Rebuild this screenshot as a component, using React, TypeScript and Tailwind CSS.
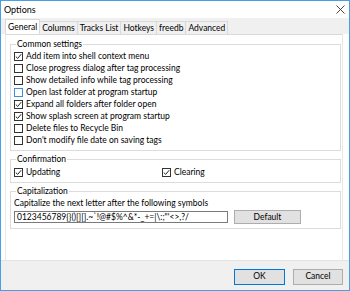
import { useState } from 'react';

const common = [
  { label: 'Add item into shell context menu', on: true },
  { label: 'Close progress dialog after tag processing', on: false },
  { label: 'Show detailed info while tag processing', on: false },
  { label: 'Open last folder at program startup', on: false, focus: true },
  { label: 'Expand all folders after folder open', on: true },
  { label: 'Show splash screen at program startup', on: true },
  { label: 'Delete files to Recycle Bin', on: false },
  { label: "Don't modify file date on saving tags", on: false },
];

const tabs = ['General', 'Columns', 'Tracks List', 'Hotkeys', 'freedb', 'Advanced'];

function Check({ on, focus, label }: { on: boolean; focus?: boolean; label: string }) {
  return (
    <div className="flex items-center h-[12px] gap-[3px]">
      <span
        className={`w-[9px] h-[9px] border bg-white flex items-center justify-center ${
          focus ? 'border-[#3c8ee0]' : 'border-[#333]'
        }`}
      >
        {on && (
          <svg width="7" height="7" viewBox="0 0 7 7">
            <path d="M0.8 3.6 L2.7 5.4 L6.2 1.2" fill="none" stroke="#222" strokeWidth="1" />
          </svg>
        )}
      </span>
      <span>{label}</span>
    </div>
  );
}

function Group({ title, children, className }: { title: string; children: React.ReactNode; className?: string }) {
  return (
    <div className={`relative border border-[#dcdcdc] px-[3px] ${className ?? ''}`}>
      <span className="absolute -top-[7px] left-[5px] bg-white px-[1px] leading-[12px]">{title}</span>
      {children}
    </div>
  );
}

export default function App() {
  const [active] = useState(0);
  return (
    <div
      className="w-[350px] h-[291px] border border-[#4a9fe3] bg-white flex flex-col text-[8.5px] text-black overflow-hidden"
      style={{ fontFamily: 'Lato, "Liberation Sans", sans-serif' }}
    >
      {/* title bar */}
      <div className="h-[17px] flex items-center justify-between pl-[3px] pr-[4px]">
        <span className="text-[9px]">Options</span>
        <svg width="9" height="9" viewBox="0 0 9 9">
          <path d="M0.5 0.5 L8.5 8.5 M8.5 0.5 L0.5 8.5" stroke="#333" strokeWidth="0.9" />
        </svg>
      </div>

      {/* tab strip */}
      <div className="h-[16px] bg-[#f0f0f0] flex items-end pl-[4px]">
        {tabs.map((t, i) => (
          <div
            key={t}
            className={`px-[2px] flex items-center border border-b-0 border-[#d9d9d9] -ml-px first:ml-0 ${
              i === active ? 'h-[15px] bg-white relative z-10' : 'h-[13px] bg-[#f0f0f0]'
            }`}
          >
            {t}
          </div>
        ))}
      </div>

      {/* panel */}
      <div className="flex-1 bg-white pl-[4px] pr-[6px]">
        <div className="h-full border border-t-[#d9d9d9] border-x-[#e8e8e8] border-b-0 pl-[4px] pr-[1px] pt-[9px] flex flex-col gap-[8px]">
          <Group title="Common settings" className="pt-[5px] pb-[4px]">
            {common.map((c) => (
              <Check key={c.label} on={c.on} focus={c.focus} label={c.label} />
            ))}
          </Group>
          <Group title="Confirmation" className="pt-[6px] pb-[4px]">
            <div className="flex">
              <div className="w-[148px]">
                <Check on label="Updating" />
              </div>
              <Check on label="Clearing" />
            </div>
          </Group>
          <Group title="Capitalization" className="pt-[5px] pb-[4px]">
            <div className="leading-[12px]">Capitalize the next letter after the following symbols</div>
            <div className="flex items-center gap-[6px] mt-[1px]">
              <div className="w-[214px] h-[12px] border border-[#7a7a7a] flex items-center px-[2px] whitespace-nowrap overflow-hidden">
                {'0123456789{}()[][].~`!@#$%^&*-_+=|\\:;"\'<>,?/'}
              </div>
              <div className="w-[67px] h-[14px] border border-[#adadad] bg-[#e1e1e1] flex items-center justify-center">
                Default
              </div>
            </div>
          </Group>
        </div>
      </div>

      {/* footer */}
      <div className="h-[30px] bg-[#f0f0f0] border-t border-[#e3e3e3] flex items-center justify-end gap-[8px] pr-[6px] pt-[2px]">
        <div className="w-[51px] h-[16px] border border-[#0078d7] bg-[#e1e1e1] flex items-center justify-center">OK</div>
        <div className="w-[50px] h-[16px] border border-[#adadad] bg-[#e1e1e1] flex items-center justify-center">Cancel</div>
      </div>
    </div>
  );
}
